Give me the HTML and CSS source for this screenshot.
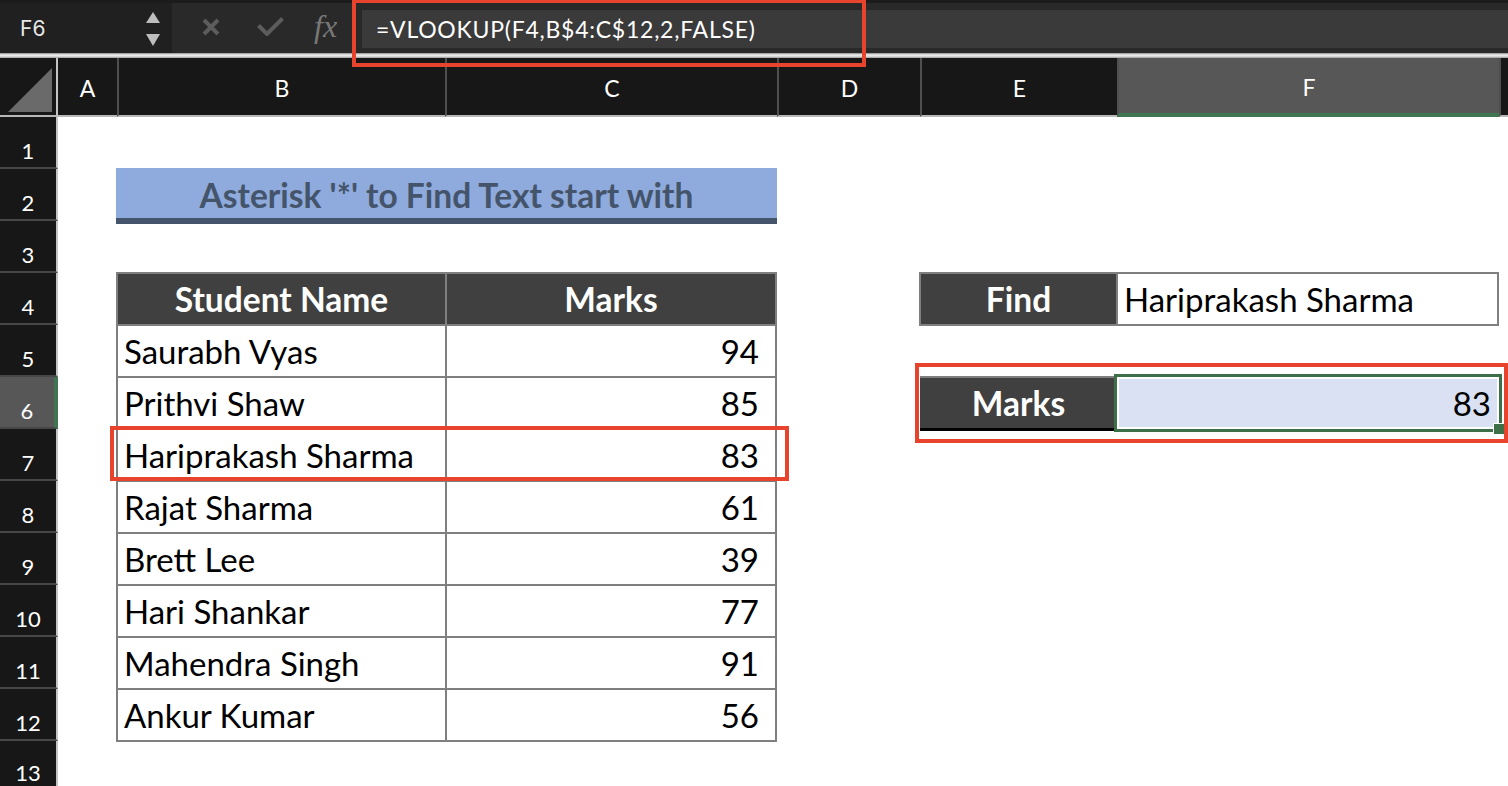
FILE: index.html
```html
<!DOCTYPE html>
<html>
<head>
<meta charset="utf-8">
<link rel="stylesheet" href="styles.css">
</head>
<body>
<div class="app">
  <div class="fbar">
    <div class="namebox">
      <span class="nb-text">F6</span>
      <svg class="spin" width="14" height="36" viewBox="0 0 14 36">
        <polygon points="7,0 14,11 0,11" fill="#bdbdbd"/>
        <polygon points="0,22 14,22 7,34" fill="#bdbdbd"/>
      </svg>
    </div>
    <div class="fbtns">
      <svg class="ic-x" width="18" height="18" viewBox="0 0 18 18">
        <path d="M2 2 L16 16 M16 2 L2 16" stroke="#5c5c5c" stroke-width="4" stroke-linecap="butt" fill="none"/>
      </svg>
      <svg class="ic-check" width="27" height="19" viewBox="0 0 27 19">
        <path d="M1.5 8.5 L10 17 L25.5 1.5" stroke="#5c5c5c" stroke-width="4" fill="none"/>
      </svg>
      <span class="fx">fx</span>
    </div>
    <div class="finput">=VLOOKUP(F4,B$4:C$12,2,FALSE)</div>
  </div>
  <div class="sep"></div>
  <div class="sheet">
    <div class="corner">
      <svg class="tri" width="56" height="57" viewBox="0 0 56 57">
        <polygon points="8,54 52,54 52,10" fill="#6a6a6a"/>
      </svg>
    </div>
    <div class="ch first">A</div>
    <div class="ch">B</div>
    <div class="ch">C</div>
    <div class="ch">D</div>
    <div class="ch">E</div>
    <div class="ch sel">F</div>
    <div class="ch rest"></div>

    <div class="rowheads">
      <div class="rh">1</div>
      <div class="rh">2</div>
      <div class="rh">3</div>
      <div class="rh">4</div>
      <div class="rh">5</div>
      <div class="rh sel">6</div>
      <div class="rh">7</div>
      <div class="rh">8</div>
      <div class="rh">9</div>
      <div class="rh">10</div>
      <div class="rh">11</div>
      <div class="rh">12</div>
      <div class="rh last">13</div>
    </div>

    <div class="title">Asterisk '*' to Find Text start with</div>

    <div class="ltable">
      <div class="th">Student Name</div>
      <div class="th">Marks</div>
      <div class="td">Saurabh Vyas</div><div class="td num">94</div>
      <div class="td">Prithvi Shaw</div><div class="td num">85</div>
      <div class="td">Hariprakash Sharma</div><div class="td num">83</div>
      <div class="td">Rajat Sharma</div><div class="td num">61</div>
      <div class="td">Brett Lee</div><div class="td num">39</div>
      <div class="td">Hari Shankar</div><div class="td num">77</div>
      <div class="td">Mahendra Singh</div><div class="td num">91</div>
      <div class="td">Ankur Kumar</div><div class="td num">56</div>
    </div>

    <div class="find">
      <div class="th">Find</div>
      <div class="td">Hariprakash Sharma</div>
    </div>

    <div class="marksrow">
      <div class="mk-label">Marks</div>
      <div class="mk-val">83</div>
    </div>
  </div>

  <div class="ann ann1"></div>
  <div class="ann ann2"></div>
  <div class="ann ann3"></div>
</div>
</body>
</html>
```

FILE: styles.css
```css
* { box-sizing: border-box; margin: 0; padding: 0; }
html, body { width: 1508px; height: 786px; overflow: hidden; background: #fff; }
body { font-family: Lato, "Open Sans", sans-serif; }

.app { position: relative; width: 1508px; height: 786px; overflow: hidden; background: #fff; }

/* formula bar */
.fbar { height: 53px; display: flex; background: #292929; border-top: 3px solid #1c1c1c; }
.namebox { width: 172px; background: #202020; display: flex; align-items: center; justify-content: space-between; padding: 0 12px 0 20px; }
.nb-text { font-family: Inter, "Liberation Sans", sans-serif; font-size: 21px; color: #e8e8e8; }
.spin { display: block; margin-top: 4px; }
.fbtns { width: 190px; display: flex; align-items: center; }
.ic-x { margin-left: 30px; margin-top: -3px; }
.ic-check { margin-left: 37px; margin-top: -3px; }
.fx { margin-left: 30px; font-family: "Liberation Serif", "DejaVu Serif", serif; font-style: italic; font-size: 32px; color: #787878; margin-top: -4px; }
.finput { flex: 1; margin: 7px 0 5px; background: #3a3a3a; color: #fff; padding-left: 14px; font-size: 23px; letter-spacing: 0.75px; display: flex; align-items: center; }

.sep { height: 5px; background: linear-gradient(#8a8a8a, #f2f2f2 40%, #d6d6d6 70%, #9a9a9a); }

/* sheet grid */
.sheet { display: grid; grid-template-columns: 58px 59px 328px 332px 143px 197px 382px 1fr; grid-template-rows: 59px repeat(12, 52px) 45px; background: #fff; }

.corner { position: relative; background: #171717; border-right: 2px solid #c4c4c4; border-bottom: 2px solid #b8b8b8; }
.tri { position: absolute; left: 0; top: 0; }

.ch { background: #171717; border-bottom: 2px solid #b8b8b8; border-left: 2px solid #4f4f4f; color: #fff; font-size: 23px; display: flex; align-items: center; justify-content: center; padding-top: 3px; }
.ch.first { border-left: none; }
.ch.sel { background: #575757; border-bottom: 4px solid #3f7550; }

.rowheads { grid-column: 1; grid-row: 2 / span 13; display: flex; flex-direction: column; }
.rh { height: 52px; flex: none; background: #171717; border-right: 2px solid #c4c4c4; border-bottom: 2px solid #474747; color: #fff; font-size: 22px; display: flex; justify-content: center; align-items: flex-end; padding-bottom: 3px; }
.rh.sel { background: #575757; border-right: 4px solid #3f7550; }
.rh.last { height: 45px; border-bottom: none; padding-bottom: 0; }

.title { grid-column: 3 / 5; grid-row: 3; margin: -1px 0 -3px -1px; background: #8faadc; border-bottom: 6px solid #44546a; color: #44546a; font-weight: 700; font-size: 33.5px; display: flex; align-items: center; justify-content: center; padding-top: 3px; }

.ltable { grid-column: 3 / 5; grid-row: 5 / span 9; margin: -1px 0 -1px -1px; background: #7f7f7f; padding: 2px; display: grid; grid-template-columns: 327px 1fr; grid-auto-rows: 1fr; gap: 2px; }

.th { background: #404040; color: #fff; font-weight: 700; font-size: 33.5px; display: flex; align-items: center; justify-content: center; }
.td { background: #fff; color: #000; font-size: 33px; display: flex; align-items: center; padding-left: 6px; white-space: nowrap; }
.td.num { justify-content: flex-end; padding-left: 0; padding-right: 16px; }

.find { grid-column: 6 / 8; grid-row: 5; margin: -1px 0 -1px -1px; background: #7f7f7f; padding: 2px; display: grid; grid-template-columns: 195px 1fr; gap: 2px; }

.marksrow { grid-column: 6 / 8; grid-row: 7; display: grid; grid-template-columns: 197px 1fr; }
.mk-label { margin: -1px 0 -2px 0; background: #404040; border-top: 2px solid #7f7f7f; border-bottom: 3px solid #000; color: #fff; font-weight: 700; font-size: 33.5px; display: flex; align-items: center; justify-content: center; }
.mk-val { position: relative; margin: -3px -3px -3px -3px; border: 3px solid #3d7048; box-shadow: inset 0 0 0 2px #fff; background: #d9e1f2; color: #000; font-size: 33px; display: flex; align-items: center; justify-content: flex-end; padding-right: 8px; }
.mk-val::after { content: ""; position: absolute; right: -5px; bottom: -5px; width: 10px; height: 10px; background: #3d7048; border-left: 1px solid #fff; border-top: 1px solid #fff; }

/* annotation boxes */
.ann { position: absolute; border: 4px solid #e8432c; }
.ann1 { left: 352px; top: -1px; width: 514px; height: 68px; }
.ann2 { left: 110px; top: 426px; width: 679px; height: 55px; }
.ann3 { left: 915px; top: 363px; width: 593px; height: 80px; }
```
